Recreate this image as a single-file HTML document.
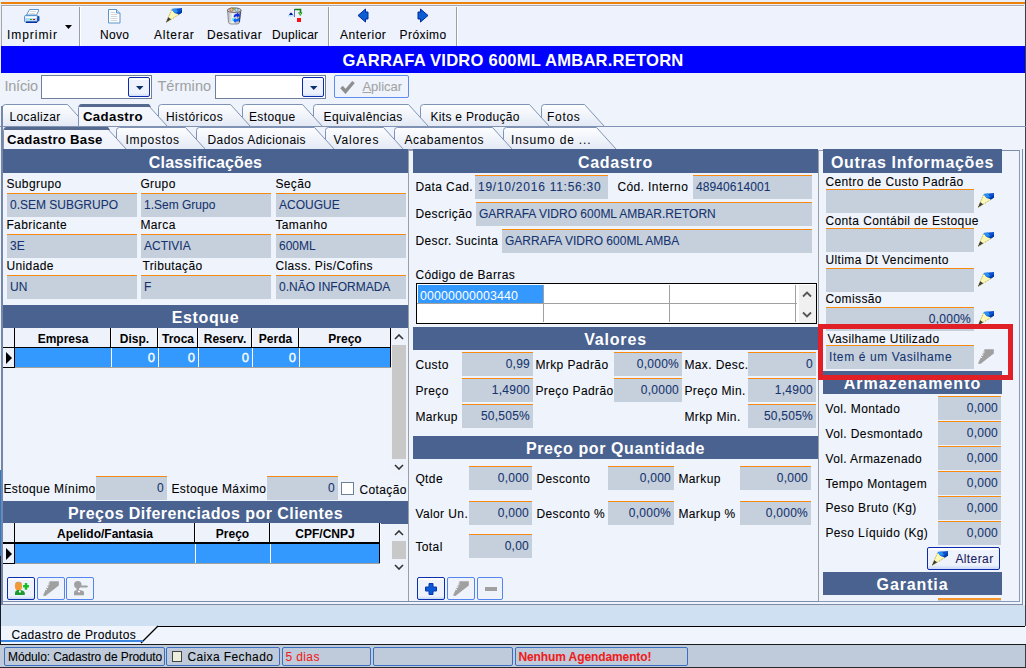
<!DOCTYPE html><html><head><meta charset="utf-8"><style>
*{margin:0;padding:0;box-sizing:border-box}
html,body{width:1026px;height:668px;overflow:hidden;background:#eef3fc;font-family:"Liberation Sans",sans-serif;font-size:12px;color:#000}
#r{position:relative;width:1026px;height:668px;overflow:hidden}
#r div,#r svg{position:absolute}
.l{white-space:nowrap;line-height:14px;font-size:12px;letter-spacing:.4px;-webkit-text-stroke:.08px currentColor}
.f{background:linear-gradient(#fb8a0c 0 1px,#bdd0e6 1px 2px,#c5d0dc 2px);padding-top:2px;color:#15336f;white-space:nowrap;overflow:hidden;font-size:12px;-webkit-text-stroke:.08px currentColor}
.h{background:#4a628f;color:#fff;font-weight:bold;font-size:16px;letter-spacing:.4px;text-align:center;white-space:nowrap;overflow:hidden}
.btn{border:1px solid #2d58b8;border-radius:3px;background:linear-gradient(#f6f9fe,#e6edf9)}
.btd{border:1px solid #7aa0e6;border-radius:3px;background:#eef3fc}
</style></head><body><div id="r">
<div class="" style="left:0px;top:0px;width:1026px;height:46px;background:#eaeff8"></div>
<div class="" style="left:1px;top:2px;width:1024px;height:2px;background:#ee8208"></div>
<div class="" style="left:1px;top:5px;width:1023px;height:41px;background:#eef2fc;border-top:1px solid #a4a6aa;border-left:1px solid #a4a6aa"></div>
<div class="" style="left:2px;top:6px;width:1021px;height:1px;background:#f8faff"></div>
<div class="" style="left:1025px;top:0px;width:1px;height:668px;background:#3a3f4a"></div>
<div class="" style="left:79px;top:7px;width:1px;height:39px;background:#9a9ea6"></div>
<div class="" style="left:80px;top:7px;width:1px;height:39px;background:#ffffff"></div>
<div class="" style="left:328px;top:7px;width:1px;height:39px;background:#9a9ea6"></div>
<div class="" style="left:329px;top:7px;width:1px;height:39px;background:#ffffff"></div>
<div class="" style="left:456px;top:7px;width:1px;height:39px;background:#9a9ea6"></div>
<div class="" style="left:457px;top:7px;width:1px;height:39px;background:#ffffff"></div>
<div class="l" style="left:7.0px;top:28px;letter-spacing:0.95px">Imprimir</div>
<div class="l" style="left:100.0px;top:28px;letter-spacing:0.3px">Novo</div>
<div class="l" style="left:154.0px;top:28px;letter-spacing:0.75px">Alterar</div>
<div class="l" style="left:207.0px;top:28px;letter-spacing:0.5px">Desativar</div>
<div class="l" style="left:272.0px;top:28px;letter-spacing:0.3px">Duplicar</div>
<div class="l" style="left:340.0px;top:28px;letter-spacing:0.55px">Anterior</div>
<div class="l" style="left:399.5px;top:28px;letter-spacing:0.45px">Próximo</div>
<svg style="left:65px;top:25px" width="8" height="5"><path d="M0 0H7L3.5 4Z" fill="#000"/></svg>
<svg style="left:24px;top:8px" width="16" height="16" viewBox="0 0 16 16">
<path d="M5.5 1.5H14.5V3L12.5 7H2.5Z" fill="#fff" stroke="#5b95cf"/>
<path d="M6 3.5H12M5 5.5H11" stroke="#d8d8d8"/>
<rect x="0.5" y="7.5" width="13" height="6.5" rx="1" fill="#b8dafa" stroke="#5b95cf"/>
<path d="M13.5 7.5L15.5 8.5V12.5L13 14.5Z" fill="#1a4fb0"/>
<rect x="1.5" y="8.5" width="11" height="1.5" fill="#fff"/>
<rect x="2" y="13.5" width="11" height="1.5" fill="#00309a"/>
<rect x="6" y="11" width="2" height="1" fill="#10c010"/><rect x="9" y="11" width="2" height="1" fill="#e00000"/>
</svg>
<svg style="left:108px;top:9px" width="13" height="15" viewBox="0 0 13 15">
<path d="M.5 .5H8.5L12 4V14H.5Z" fill="#fff" stroke="#5b95cf"/><path d="M8.5 .5V4H12" fill="#dde8f5" stroke="#5b95cf"/>
<path d="M2.5 3.5H7M2.5 5.5H9.5M2.5 7.5H9.5M2.5 9.5H9.5M2.5 11.5H9.5" stroke="#d4d8de"/></svg>
<svg style="left:166px;top:7px" width="17" height="17" viewBox="0 0 17 17"><path d="M5.5 3L13 7.5L0 15.5Z" fill="#fbf8b8"/><path d="M5.5 3L0 15.5M13 7.5L0 15.5" stroke="#b0a828" stroke-width="1" stroke-dasharray="1 1"/><path d="M0 15.5L2.2 10.3L5.2 12.3Z" fill="#3c3c3c"/><path d="M5.5 2L16 1V5.5L13 7.5L8.5 6Z" fill="#0a50d0"/><path d="M5.5 2L10 1.5L12 5L8.5 6Z" fill="#2a90f0"/><path d="M16 3V5.5L13 7.5L11.5 6.5Z" fill="#003a9e"/></svg>
<svg style="left:226px;top:7px" width="17" height="18" viewBox="0 0 17 18">
<defs><linearGradient id="bg1" x1="0" x2="1"><stop offset="0" stop-color="#b8b8b8"/><stop offset=".35" stop-color="#f6f6f6"/><stop offset="1" stop-color="#a8a8b0"/></linearGradient></defs>
<path d="M1.5 3.5L2.5 15.5Q3 17 5 17H11Q13 17 13.5 15.5L15 3.5Z" fill="url(#bg1)" stroke="#7a7a7a" stroke-width=".8"/>
<path d="M14.3 4.5L13.3 15" stroke="#283878" stroke-width="1"/>
<path d="M3.5 5.5V15.5M5 5.5V15.5" stroke="#b8c0f0" stroke-width=".8" stroke-dasharray="1 1"/>
<ellipse cx="8.25" cy="3.2" rx="6.9" ry="2.3" fill="#d8d8d8" stroke="#505050" stroke-width=".8"/>
<circle cx="5.5" cy="2.6" r="1.7" fill="#f4b4b4" stroke="#a05018" stroke-width=".7"/>
<circle cx="10.5" cy="2.8" r="1.5" fill="#b8ecf0" stroke="#4a4a8a" stroke-width=".5"/>
<path d="M7.5 .8L8.5 3" stroke="#40c018" stroke-width="1.1"/>
<path d="M7.5 9.5Q8.2 6.5 11.2 6.8V5.3L14 8.2L11.2 10.8V9.3Q9.6 9 8.8 10.5Z" fill="#0a30e8"/>
<path d="M13.5 12Q12.8 15 9.6 14.7V16.2L6.8 13.3L9.6 10.7V12.2Q11.4 12.5 12 11Z" fill="#0a64f4"/>
<path d="M7 11V14" stroke="#30e0f8" stroke-width="1.2"/></svg>
<svg style="left:288px;top:8px" width="15" height="15" viewBox="0 0 15 15">
<path d="M1 7Q3 2 5 7Z" fill="#00208a"/><rect x="0" y="7" width="6" height="1.5" fill="#b0e0ff"/>
<rect x="6" y="1" width="1" height="8" fill="#6a6ac8"/>
<path d="M6.5 1.5H12.5V5.5" stroke="#108010" stroke-width="1.6" fill="none"/>
<path d="M10 4.5H14.5L12.3 8Z" fill="#108010"/><rect x="11.5" y="5" width="1.6" height="1.6" fill="#80f060"/>
<rect x="9" y="10" width="4" height="4" fill="#ff1010"/></svg>
<svg style="left:356px;top:7px" width="14" height="17" viewBox="356 7 14 17"><path d="M358 15.5L365.5 9V12H368V19H365.5V22Z" fill="#0a5ed0" stroke="#0028a0" stroke-width="1" stroke-linejoin="miter"/></svg>
<svg style="left:416px;top:7px" width="14" height="17" viewBox="416 7 14 17"><path d="M428 15.5L420.5 9V12H418V19H420.5V22Z" fill="#0a5ed0" stroke="#0028a0" stroke-width="1" stroke-linejoin="miter"/></svg>
<div class="" style="left:1px;top:46px;width:1024px;height:27px;background:#0000fe"></div>
<div style="left:0;top:46px;width:1026px;height:27px;line-height:29px;text-align:center;color:#fff;font-weight:bold;font-size:16.6px;letter-spacing:.2px;white-space:nowrap">GARRAFA VIDRO 600ML AMBAR.RETORN</div>
<div class="l" style="left:4.4px;top:79px;color:#a0a0a0;font-size:14.5px;letter-spacing:-.2px;-webkit-text-stroke:0">Início</div>
<div class="" style="left:41px;top:75px;width:111px;height:24px;background:#fff;border:1px solid #6f7f9c"></div>
<div class="" style="left:128px;top:77px;width:22px;height:20px;background:linear-gradient(#fff 0 2px,#eef2fc 2px 15px,#c9d9f8 19px);border:1px solid #0c2cb0;border-radius:2px"></div>
<svg style="left:135.5px;top:86px" width="8" height="5"><path d="M0 0H7.5L3.75 4Z" fill="#0a2e6e"/></svg>
<div class="l" style="left:157.4px;top:79px;color:#a0a0a0;font-size:14.5px;letter-spacing:.1px;-webkit-text-stroke:0">Término</div>
<div class="" style="left:215px;top:75px;width:111px;height:24px;background:#fff;border:1px solid #6f7f9c"></div>
<div class="" style="left:302px;top:77px;width:22px;height:20px;background:linear-gradient(#fff 0 2px,#eef2fc 2px 15px,#c9d9f8 19px);border:1px solid #0c2cb0;border-radius:2px"></div>
<svg style="left:309.5px;top:86px" width="8" height="5"><path d="M0 0H7.5L3.75 4Z" fill="#0a2e6e"/></svg>
<div class="" style="left:334px;top:75px;width:75px;height:23px;background:#eef3fc;border:1px solid #5e8cf0;border-radius:2px"></div>
<svg style="left:338px;top:78px" width="20" height="17" viewBox="338 78 20 17"><path d="M341.5 87L345.5 91.5L353.5 82" stroke="#8e8e8e" stroke-width="3.4" fill="none" stroke-linejoin="miter" stroke-miterlimit="10"/></svg>
<div class="l" style="left:362.4px;top:80px;color:#a3a3a3;font-size:13px;letter-spacing:0"><u>A</u>plicar</div>
<div class="" style="left:0px;top:126px;width:1026px;height:1px;background:#8193b4"></div>
<svg style="left:0;top:103px" width="1026" height="24" viewBox="0 103 1026 24"><defs><linearGradient id="tg" x1="0" y1="0" x2="0" y2="1"><stop offset="0" stop-color="#fdfeff"/><stop offset="1" stop-color="#e3e9f5"/></linearGradient><linearGradient id="ta" x1="0" y1="0" x2="0" y2="1"><stop offset="0" stop-color="#f6f8fe"/><stop offset="1" stop-color="#eef2fb"/></linearGradient></defs><path d="M541.5 126.5V107.5Q541.5 104.5 544.5 104.5H584.5L604.5 126.5Z" fill="url(#tg)" stroke="#8193b4"/><path d="M420.5 126.5V107.5Q420.5 104.5 423.5 104.5H529.5L549.5 126.5Z" fill="url(#tg)" stroke="#8193b4"/><path d="M313.5 126.5V107.5Q313.5 104.5 316.5 104.5H408.5L428.5 126.5Z" fill="url(#tg)" stroke="#8193b4"/><path d="M242.5 126.5V107.5Q242.5 104.5 245.5 104.5H302.5L322.5 126.5Z" fill="url(#tg)" stroke="#8193b4"/><path d="M158.5 126.5V107.5Q158.5 104.5 161.5 104.5H230.5L250.5 126.5Z" fill="url(#tg)" stroke="#8193b4"/><path d="M2.5 126.5V107.5Q2.5 104.5 5.5 104.5H67.5L87.5 126.5Z" fill="url(#tg)" stroke="#8193b4"/><path d="M78.5 126.5V107.5Q78.5 104.5 81.5 104.5H147.5L167.5 126.5Z" fill="url(#ta)" stroke="#8193b4"/><path d="M79 107Q79 104 82 104H149L151 107H79Z" fill="#56698f"/><text x="9.5" y="121" font-family="Liberation Sans" font-size="12" font-weight="normal" letter-spacing="0.35" fill="#000">Localizar</text><text x="83" y="121" font-family="Liberation Sans" font-size="13.2" font-weight="bold" letter-spacing="0.35" fill="#000">Cadastro</text><text x="166" y="121" font-family="Liberation Sans" font-size="12" font-weight="normal" letter-spacing="0.45" fill="#000">Históricos</text><text x="249" y="121" font-family="Liberation Sans" font-size="12" font-weight="normal" letter-spacing="0.35" fill="#000">Estoque</text><text x="323.5" y="121" font-family="Liberation Sans" font-size="12" font-weight="normal" letter-spacing="0.4" fill="#000">Equivalências</text><text x="430.5" y="121" font-family="Liberation Sans" font-size="12" font-weight="normal" letter-spacing="0.3" fill="#000">Kits e Produção</text><text x="547" y="121" font-family="Liberation Sans" font-size="12" font-weight="normal" letter-spacing="0.7" fill="#000">Fotos</text></svg>
<svg style="left:0;top:126px" width="1026" height="24" viewBox="0 126 1026 24"><defs><linearGradient id="tg" x1="0" y1="0" x2="0" y2="1"><stop offset="0" stop-color="#fdfeff"/><stop offset="1" stop-color="#e3e9f5"/></linearGradient><linearGradient id="ta" x1="0" y1="0" x2="0" y2="1"><stop offset="0" stop-color="#f6f8fe"/><stop offset="1" stop-color="#eef2fb"/></linearGradient></defs><path d="M503.5 149.5V130.5Q503.5 127.5 506.5 127.5H596.5L616.5 149.5Z" fill="url(#tg)" stroke="#8193b4"/><path d="M394.5 149.5V130.5Q394.5 127.5 397.5 127.5H492.5L512.5 149.5Z" fill="url(#tg)" stroke="#8193b4"/><path d="M325.5 149.5V130.5Q325.5 127.5 328.5 127.5H383.5L403.5 149.5Z" fill="url(#tg)" stroke="#8193b4"/><path d="M196.5 149.5V130.5Q196.5 127.5 199.5 127.5H314.5L334.5 149.5Z" fill="url(#tg)" stroke="#8193b4"/><path d="M116.5 149.5V130.5Q116.5 127.5 119.5 127.5H185.5L205.5 149.5Z" fill="url(#tg)" stroke="#8193b4"/><path d="M3.5 149.5V130.5Q3.5 127.5 6.5 127.5H106.5L126.5 149.5Z" fill="url(#ta)" stroke="#8193b4"/><path d="M4 130Q4 127 7 127H108L110 130H4Z" fill="#56698f"/><text x="7" y="144" font-family="Liberation Sans" font-size="13.2" font-weight="bold" letter-spacing="0.25" fill="#000">Cadastro Base</text><text x="125.5" y="144" font-family="Liberation Sans" font-size="12" font-weight="normal" letter-spacing="0.7" fill="#000">Impostos</text><text x="207.5" y="144" font-family="Liberation Sans" font-size="12" font-weight="normal" letter-spacing="0.4" fill="#000">Dados Adicionais</text><text x="333.5" y="144" font-family="Liberation Sans" font-size="12" font-weight="normal" letter-spacing="0.85" fill="#000">Valores</text><text x="404.5" y="144" font-family="Liberation Sans" font-size="12" font-weight="normal" letter-spacing="0.55" fill="#000">Acabamentos</text><text x="511" y="144" font-family="Liberation Sans" font-size="12" font-weight="normal" letter-spacing="0.85" fill="#000">Insumo de ...</text></svg>
<div class="" style="left:1px;top:106px;width:2px;height:44px;background:#7587a8"></div>
<div class="" style="left:1px;top:149px;width:1022px;height:456px;border:1px solid #7c8cab;border-left:2px solid #7587a8;border-top:none"></div>
<div class="" style="left:1px;top:601px;width:1019px;height:1px;background:#7c8cab"></div>
<div class="" style="left:819px;top:150px;width:201px;height:452px;border:1px solid #8a9ab6;border-top:1px solid #7c8cab"></div>
<div class="" style="left:408px;top:150px;width:5px;height:451px;background:#eef3fc;border-left:1px solid #9a9ea6;border-top:1px solid #9a9ea6"></div>
<div class="" style="left:818px;top:150px;width:5px;height:451px;background:#eef3fc;border-left:1px solid #9a9ea6;border-top:1px solid #9a9ea6"></div>
<div class="h" style="left:3px;top:149px;width:405px;height:24px;line-height:27px;letter-spacing:.15px">Classificações</div>
<div class="l" style="left:6.4px;top:177px;">Subgrupo</div>
<div class="l" style="left:140.4px;top:177px;">Grupo</div>
<div class="l" style="left:275.4px;top:177px;">Seção</div>
<div class="f" style="left:7px;top:193px;width:130px;height:24px;line-height:21px;padding-left:3px;">0.SEM SUBGRUPO</div>
<div class="f" style="left:141px;top:193px;width:130px;height:24px;line-height:21px;padding-left:3px;">1.Sem Grupo</div>
<div class="f" style="left:276px;top:193px;width:130px;height:24px;line-height:21px;padding-left:3px;">ACOUGUE</div>
<div class="l" style="left:6.4px;top:218px;">Fabricante</div>
<div class="l" style="left:140.4px;top:218px;">Marca</div>
<div class="l" style="left:275.4px;top:218px;">Tamanho</div>
<div class="f" style="left:7px;top:234px;width:130px;height:24px;line-height:21px;padding-left:3px;">3E</div>
<div class="f" style="left:141px;top:234px;width:130px;height:24px;line-height:21px;padding-left:3px;">ACTIVIA</div>
<div class="f" style="left:276px;top:234px;width:130px;height:24px;line-height:21px;padding-left:3px;">600ML</div>
<div class="l" style="left:6.4px;top:259px;">Unidade</div>
<div class="l" style="left:142.4px;top:259px;">Tributação</div>
<div class="l" style="left:275.4px;top:259px;">Class. Pis/Cofins</div>
<div class="f" style="left:7px;top:275px;width:130px;height:24px;line-height:21px;padding-left:3px;">UN</div>
<div class="f" style="left:141px;top:275px;width:130px;height:24px;line-height:21px;padding-left:3px;">F</div>
<div class="f" style="left:276px;top:275px;width:130px;height:24px;line-height:21px;padding-left:3px;">0.NÃO INFORMADA</div>
<div class="h" style="left:3px;top:305px;width:405px;height:23px;line-height:25px;letter-spacing:.6px">Estoque</div>
<div class="" style="left:3px;top:328px;width:388px;height:20px;background:#eef2fb"></div>
<div class="" style="left:3px;top:348px;width:12px;height:20px;background:#eef2fb"></div>
<div class="" style="left:14px;top:328px;width:1px;height:40px;background:#000"></div>
<div style="left:15px;top:328px;width:96px;height:20px;line-height:22px;text-align:center;font-weight:bold;font-size:12px;white-space:nowrap">Empresa</div>
<div class="" style="left:110px;top:328px;width:1px;height:20px;background:#000"></div>
<div class="" style="left:111px;top:328px;width:1px;height:20px;background:#fafcff"></div>
<div style="left:111px;top:328px;width:47px;height:20px;line-height:22px;text-align:center;font-weight:bold;font-size:12px;white-space:nowrap">Disp.</div>
<div class="" style="left:157px;top:328px;width:1px;height:20px;background:#000"></div>
<div class="" style="left:158px;top:328px;width:1px;height:20px;background:#fafcff"></div>
<div style="left:158px;top:328px;width:40px;height:20px;line-height:22px;text-align:center;font-weight:bold;font-size:12px;white-space:nowrap">Troca</div>
<div class="" style="left:197px;top:328px;width:1px;height:20px;background:#000"></div>
<div class="" style="left:198px;top:328px;width:1px;height:20px;background:#fafcff"></div>
<div style="left:198px;top:328px;width:54px;height:20px;line-height:22px;text-align:center;font-weight:bold;font-size:12px;white-space:nowrap">Reserv.</div>
<div class="" style="left:251px;top:328px;width:1px;height:20px;background:#000"></div>
<div class="" style="left:252px;top:328px;width:1px;height:20px;background:#fafcff"></div>
<div style="left:252px;top:328px;width:47px;height:20px;line-height:22px;text-align:center;font-weight:bold;font-size:12px;white-space:nowrap">Perda</div>
<div class="" style="left:298px;top:328px;width:1px;height:20px;background:#000"></div>
<div class="" style="left:299px;top:328px;width:1px;height:20px;background:#fafcff"></div>
<div style="left:299px;top:328px;width:92px;height:20px;line-height:22px;text-align:center;font-weight:bold;font-size:12px;white-space:nowrap">Preço</div>
<div class="" style="left:390px;top:328px;width:1px;height:20px;background:#000"></div>
<div class="" style="left:391px;top:328px;width:1px;height:20px;background:#fafcff"></div>
<div class="" style="left:3px;top:347px;width:388px;height:1px;background:#000"></div>
<div class="" style="left:15px;top:348px;width:376px;height:19px;background:#3399ff"></div>
<div class="" style="left:3px;top:367px;width:388px;height:1px;background:#a0a0a0"></div>
<div class="" style="left:3px;top:367px;width:12px;height:1px;background:#000"></div>
<svg style="left:5px;top:352px" width="8" height="12"><path d="M1 0L7 6L1 12Z" fill="#000"/></svg>
<div class="" style="left:111px;top:348px;width:1px;height:19px;background:#fff"></div>
<div style="left:111px;top:348px;width:44px;height:19px;line-height:20.5px;text-align:right;color:#fff;font-size:13px;-webkit-text-stroke:.35px #fff">0</div>
<div class="" style="left:158px;top:348px;width:1px;height:19px;background:#fff"></div>
<div style="left:158px;top:348px;width:37px;height:19px;line-height:20.5px;text-align:right;color:#fff;font-size:13px;-webkit-text-stroke:.35px #fff">0</div>
<div class="" style="left:198px;top:348px;width:1px;height:19px;background:#fff"></div>
<div style="left:198px;top:348px;width:51px;height:19px;line-height:20.5px;text-align:right;color:#fff;font-size:13px;-webkit-text-stroke:.35px #fff">0</div>
<div class="" style="left:252px;top:348px;width:1px;height:19px;background:#fff"></div>
<div style="left:252px;top:348px;width:44px;height:19px;line-height:20.5px;text-align:right;color:#fff;font-size:13px;-webkit-text-stroke:.35px #fff">0</div>
<div class="" style="left:299px;top:348px;width:1px;height:19px;background:#fff"></div>
<div class="" style="left:390px;top:348px;width:1px;height:19px;background:#000"></div>
<div class="" style="left:391px;top:328px;width:16px;height:149px;background:#eef2fb"></div>
<div class="" style="left:392px;top:345px;width:14px;height:114px;background:#c8c8c8"></div>
<svg style="left:394px;top:334px" width="10" height="6"><path d="M1 5L5 1L9 5" stroke="#333" stroke-width="1.6" fill="none"/></svg>
<svg style="left:394px;top:464px" width="10" height="6"><path d="M1 1L5 5L9 1" stroke="#333" stroke-width="1.6" fill="none"/></svg>
<div class="l" style="left:3.4px;top:482px;">Estoque Mínimo</div>
<div class="f" style="left:96px;top:476px;width:71px;height:24px;line-height:21px;padding-right:3px;text-align:right;letter-spacing:.25px;">0</div>
<div class="l" style="left:171.4px;top:482px;">Estoque Máximo</div>
<div class="f" style="left:267px;top:476px;width:71px;height:24px;line-height:21px;padding-right:3px;text-align:right;letter-spacing:.25px;">0</div>
<div class="" style="left:341px;top:482px;width:13px;height:13px;background:#fff;border:1px solid #6f7f98"></div>
<div class="l" style="left:359.4px;top:483px;">Cotação</div>
<div class="h" style="left:3px;top:501px;width:405px;height:23px;line-height:25px;letter-spacing:.44px">Preços Diferenciados por Clientes</div>
<div class="" style="left:3px;top:523px;width:377px;height:21px;background:#eef2fb"></div>
<div class="" style="left:3px;top:544px;width:12px;height:20px;background:#eef2fb"></div>
<div class="" style="left:14px;top:523px;width:1px;height:41px;background:#000"></div>
<div style="left:15px;top:523px;width:180px;height:21px;line-height:23px;text-align:center;font-weight:bold;font-size:12px;white-space:nowrap">Apelido/Fantasia</div>
<div class="" style="left:194px;top:523px;width:1px;height:21px;background:#000"></div>
<div class="" style="left:195px;top:523px;width:1px;height:21px;background:#fafcff"></div>
<div style="left:195px;top:523px;width:75px;height:21px;line-height:23px;text-align:center;font-weight:bold;font-size:12px;white-space:nowrap">Preço</div>
<div class="" style="left:269px;top:523px;width:1px;height:21px;background:#000"></div>
<div class="" style="left:270px;top:523px;width:1px;height:21px;background:#fafcff"></div>
<div style="left:270px;top:523px;width:110px;height:21px;line-height:23px;text-align:center;font-weight:bold;font-size:12px;white-space:nowrap">CPF/CNPJ</div>
<div class="" style="left:379px;top:523px;width:1px;height:21px;background:#000"></div>
<div class="" style="left:380px;top:523px;width:1px;height:21px;background:#fafcff"></div>
<div class="" style="left:3px;top:543px;width:377px;height:1px;background:#000"></div>
<div class="" style="left:15px;top:544px;width:365px;height:19px;background:#3399ff"></div>
<div class="" style="left:3px;top:563px;width:377px;height:1px;background:#a0a0a0"></div>
<div class="" style="left:3px;top:563px;width:12px;height:1px;background:#000"></div>
<svg style="left:5px;top:548px" width="8" height="12"><path d="M1 0L7 6L1 12Z" fill="#000"/></svg>
<div class="" style="left:195px;top:544px;width:1px;height:19px;background:#fff"></div>
<div class="" style="left:270px;top:544px;width:1px;height:19px;background:#fff"></div>
<div class="" style="left:379px;top:544px;width:1px;height:19px;background:#000"></div>
<div class="" style="left:3px;top:542px;width:377px;height:1px;background:#000"></div>
<div class="" style="left:391px;top:524px;width:16px;height:52px;background:#eef2fb"></div>
<div class="" style="left:392px;top:541px;width:14px;height:18px;background:#c8c8c8"></div>
<svg style="left:394px;top:530px" width="10" height="6"><path d="M1 5L5 1L9 5" stroke="#333" stroke-width="1.6" fill="none"/></svg>
<svg style="left:394px;top:564px" width="10" height="6"><path d="M1 1L5 5L9 1" stroke="#333" stroke-width="1.6" fill="none"/></svg>
<div class="" style="left:7px;top:577px;width:28px;height:23px;border:1px solid #0a30b0;border-radius:2px;background:linear-gradient(#fff 0 2px,#eef2fc 2px 18px,#c9d8f6 21px)"></div>
<svg style="left:13px;top:581px" width="18" height="16" viewBox="13 581 18 16"><ellipse cx="18.5" cy="586.3" rx="3.6" ry="4.2" fill="#f39a38"/><path d="M15.5 583.5Q18.5 581 21.5 583.5" stroke="#c8a060" stroke-width="1.2" fill="none"/><path d="M15 595V593Q15 590.5 17.5 590H20.5Q24.5 590.5 24.8 593V595Z" fill="#1f9a30"/><rect x="19" y="590.5" width="1.8" height="2" fill="#fff"/><path d="M23.1 586.3H28.9M26 583V589.8" stroke="#10c020" stroke-width="2.4"/></svg>
<div class="" style="left:37px;top:577px;width:28px;height:23px;border:1px solid #5384ef;border-radius:2px"></div>
<svg style="left:42px;top:580px" width="18" height="17" viewBox="42 580 18 17"><path d="M43 595.5L49.7 581.3H58.8V585.4L45.4 596Z" fill="#a0a0a0"/><path d="M49.3 583.5L46.3 590" stroke="#f4f4f4" stroke-width="1" stroke-dasharray="2 1"/></svg>
<div class="" style="left:66px;top:577px;width:28px;height:23px;border:1px solid #5384ef;border-radius:2px"></div>
<svg style="left:72px;top:580px" width="18" height="17" viewBox="72 580 18 17"><circle cx="77.8" cy="584.8" r="3.7" fill="#a0a0a0"/><path d="M76.5 588H79V590H76.5Z" fill="#a0a0a0"/><path d="M74 595.2V592.5Q74 590.5 76 590.3H80Q84 590.5 84 592.5V595.2Z" fill="#a0a0a0"/><rect x="78" y="591" width="2" height="1.3" fill="#fff"/><path d="M81 585.6H87L88 586.5L87 587.5H81Z" fill="#a0a0a0"/></svg>
<div class="h" style="left:413px;top:149px;width:405px;height:24px;line-height:27px;letter-spacing:.7px">Cadastro</div>
<div class="l" style="left:415.4px;top:180px;">Data Cad.</div>
<div class="f" style="left:475px;top:175px;width:133px;height:24px;line-height:21px;padding-left:3px;letter-spacing:.75px">19/10/2016 11:56:30</div>
<div class="l" style="left:617.4px;top:180px;">Cód. Interno</div>
<div class="f" style="left:693px;top:175px;width:119px;height:24px;line-height:21px;padding-left:3px;letter-spacing:.1px">48940614001</div>
<div class="l" style="left:415.4px;top:207px;">Descrição</div>
<div class="f" style="left:476px;top:202px;width:336px;height:24px;line-height:21px;padding-left:3px;">GARRAFA VIDRO 600ML AMBAR.RETORN</div>
<div class="l" style="left:415.4px;top:234px;">Descr. Sucinta</div>
<div class="f" style="left:502px;top:229px;width:310px;height:24px;line-height:21px;padding-left:3px;">GARRAFA VIDRO 600ML AMBA</div>
<div class="l" style="left:415.4px;top:268px;">Código de Barras</div>
<div class="" style="left:416px;top:283px;width:401px;height:41px;background:#fff;border:1px solid #000"></div>
<div class="" style="left:418px;top:285px;width:125px;height:18px;background:#3399ff"></div>
<div style="left:420px;top:286px;height:18px;line-height:20px;color:#fff;font-size:12.4px;letter-spacing:.1px;white-space:nowrap">00000000003440</div>
<div class="" style="left:417px;top:303px;width:380px;height:1px;background:#a0a0a0"></div>
<div class="" style="left:543px;top:285px;width:1px;height:37px;background:#a0a0a0"></div>
<div class="" style="left:669px;top:285px;width:1px;height:37px;background:#a0a0a0"></div>
<div class="" style="left:795px;top:285px;width:1px;height:37px;background:#a0a0a0"></div>
<div class="" style="left:799px;top:285px;width:17px;height:38px;background:#f0f0f0"></div>
<svg style="left:802px;top:291px" width="10" height="7"><path d="M1 5.5L5 1.5L9 5.5" stroke="#555" stroke-width="1.8" fill="none"/></svg>
<svg style="left:802px;top:311px" width="10" height="7"><path d="M1 1.5L5 5.5L9 1.5" stroke="#555" stroke-width="1.8" fill="none"/></svg>
<div class="h" style="left:413px;top:327px;width:405px;height:23px;line-height:25px;letter-spacing:.83px">Valores</div>
<div class="l" style="left:415.4px;top:357.5px;">Custo</div>
<div class="f" style="left:462px;top:352px;width:71px;height:24px;line-height:21px;padding-right:3px;text-align:right;letter-spacing:.25px;">0,99</div>
<div class="l" style="left:535.4px;top:357.5px;">Mrkp Padrão</div>
<div class="f" style="left:614px;top:352px;width:68px;height:24px;line-height:21px;padding-right:3px;text-align:right;letter-spacing:.25px;">0,000%</div>
<div class="l" style="left:684.4px;top:357.5px;">Max. Desc.</div>
<div class="f" style="left:748px;top:352px;width:68px;height:24px;line-height:21px;padding-right:3px;text-align:right;letter-spacing:.25px;">0</div>
<div class="l" style="left:415.4px;top:383.5px;">Preço</div>
<div class="f" style="left:462px;top:378px;width:71px;height:24px;line-height:21px;padding-right:3px;text-align:right;letter-spacing:.25px;">1,4900</div>
<div class="l" style="left:535.4px;top:383.5px;">Preço Padrão</div>
<div class="f" style="left:614px;top:378px;width:68px;height:24px;line-height:21px;padding-right:3px;text-align:right;letter-spacing:.25px;">0,0000</div>
<div class="l" style="left:684.4px;top:383.5px;">Preço Min.</div>
<div class="f" style="left:748px;top:378px;width:68px;height:24px;line-height:21px;padding-right:3px;text-align:right;letter-spacing:.25px;">1,4900</div>
<div class="l" style="left:415.4px;top:409.5px;">Markup</div>
<div class="f" style="left:462px;top:404px;width:71px;height:24px;line-height:21px;padding-right:3px;text-align:right;letter-spacing:.25px;">50,505%</div>
<div class="l" style="left:684.4px;top:409.5px;">Mrkp Min.</div>
<div class="f" style="left:748px;top:404px;width:68px;height:24px;line-height:21px;padding-right:3px;text-align:right;letter-spacing:.25px;">50,505%</div>
<div class="h" style="left:413px;top:436px;width:405px;height:23px;line-height:25px;letter-spacing:.6px">Preço por Quantidade</div>
<div class="l" style="left:415.4px;top:472px;">Qtde</div>
<div class="f" style="left:469px;top:466px;width:63px;height:24px;line-height:21px;padding-right:3px;text-align:right;letter-spacing:.25px;">0,000</div>
<div class="l" style="left:536.4px;top:472px;">Desconto</div>
<div class="f" style="left:608px;top:466px;width:66px;height:24px;line-height:21px;padding-right:3px;text-align:right;letter-spacing:.25px;">0,000</div>
<div class="l" style="left:678.4px;top:472px;">Markup</div>
<div class="f" style="left:740px;top:466px;width:71px;height:24px;line-height:21px;padding-right:3px;text-align:right;letter-spacing:.25px;">0,000</div>
<div class="l" style="left:415.4px;top:507px;">Valor Un.</div>
<div class="f" style="left:469px;top:501px;width:63px;height:24px;line-height:21px;padding-right:3px;text-align:right;letter-spacing:.25px;">0,000</div>
<div class="l" style="left:536.4px;top:507px;">Desconto %</div>
<div class="f" style="left:608px;top:501px;width:66px;height:24px;line-height:21px;padding-right:3px;text-align:right;letter-spacing:.25px;">0,000%</div>
<div class="l" style="left:678.4px;top:507px;">Markup %</div>
<div class="f" style="left:740px;top:501px;width:71px;height:24px;line-height:21px;padding-right:3px;text-align:right;letter-spacing:.25px;">0,000%</div>
<div class="l" style="left:415.4px;top:540px;">Total</div>
<div class="f" style="left:469px;top:534px;width:63px;height:24px;line-height:21px;padding-right:3px;text-align:right;letter-spacing:.25px;">0,00</div>
<div class="" style="left:417px;top:577px;width:28px;height:23px;border:1px solid #0a30b0;border-radius:2px;background:linear-gradient(#fff 0 2px,#eef2fc 2px 18px,#c9d8f6 21px)"></div>
<svg style="left:424px;top:582px" width="14" height="14" viewBox="424 582 14 14"><path d="M429 583.5H433V587H436.5V591H433V594.5H429V591H425.5V587H429Z" fill="#0a5ad8" stroke="#0a36a8" stroke-width="1"/></svg>
<div class="" style="left:447px;top:577px;width:28px;height:23px;border:1px solid #5384ef;border-radius:2px"></div>
<svg style="left:452px;top:580px" width="18" height="17" viewBox="452 580 18 17"><path d="M453 595.5L459.7 581.3H468.8V585.4L455.4 596Z" fill="#a0a0a0"/><path d="M459.3 583.5L456.3 590" stroke="#f4f4f4" stroke-width="1" stroke-dasharray="2 1"/></svg>
<div class="" style="left:477px;top:577px;width:26px;height:23px;border:1px solid #5384ef;border-radius:2px"></div>
<div class="" style="left:485px;top:587px;width:12px;height:4px;background:#a0a0a0"></div>
<div class="h" style="left:823px;top:149px;width:179px;height:24px;line-height:27px;letter-spacing:.67px">Outras Informações</div>
<div class="l" style="left:825.4px;top:175px;">Centro de Custo Padrão</div>
<div class="f" style="left:826px;top:189px;width:148px;height:24px;line-height:21px;padding-right:3px;text-align:right;letter-spacing:.25px;"></div>
<svg style="left:978px;top:192px" width="17" height="17" viewBox="0 0 17 17"><path d="M5.5 3L13 7.5L0 15.5Z" fill="#fbf8b8"/><path d="M5.5 3L0 15.5M13 7.5L0 15.5" stroke="#b0a828" stroke-width="1" stroke-dasharray="1 1"/><path d="M0 15.5L2.2 10.3L5.2 12.3Z" fill="#3c3c3c"/><path d="M5.5 2L16 1V5.5L13 7.5L8.5 6Z" fill="#0a50d0"/><path d="M5.5 2L10 1.5L12 5L8.5 6Z" fill="#2a90f0"/><path d="M16 3V5.5L13 7.5L11.5 6.5Z" fill="#003a9e"/></svg>
<div class="l" style="left:825.4px;top:214px;">Conta Contábil de Estoque</div>
<div class="f" style="left:826px;top:228px;width:148px;height:24px;line-height:21px;padding-right:3px;text-align:right;letter-spacing:.25px;"></div>
<svg style="left:978px;top:231px" width="17" height="17" viewBox="0 0 17 17"><path d="M5.5 3L13 7.5L0 15.5Z" fill="#fbf8b8"/><path d="M5.5 3L0 15.5M13 7.5L0 15.5" stroke="#b0a828" stroke-width="1" stroke-dasharray="1 1"/><path d="M0 15.5L2.2 10.3L5.2 12.3Z" fill="#3c3c3c"/><path d="M5.5 2L16 1V5.5L13 7.5L8.5 6Z" fill="#0a50d0"/><path d="M5.5 2L10 1.5L12 5L8.5 6Z" fill="#2a90f0"/><path d="M16 3V5.5L13 7.5L11.5 6.5Z" fill="#003a9e"/></svg>
<div class="l" style="left:825.4px;top:253px;">Ultima Dt Vencimento</div>
<div class="f" style="left:826px;top:268px;width:148px;height:24px;line-height:21px;padding-right:3px;text-align:right;letter-spacing:.25px;"></div>
<svg style="left:978px;top:271px" width="17" height="17" viewBox="0 0 17 17"><path d="M5.5 3L13 7.5L0 15.5Z" fill="#fbf8b8"/><path d="M5.5 3L0 15.5M13 7.5L0 15.5" stroke="#b0a828" stroke-width="1" stroke-dasharray="1 1"/><path d="M0 15.5L2.2 10.3L5.2 12.3Z" fill="#3c3c3c"/><path d="M5.5 2L16 1V5.5L13 7.5L8.5 6Z" fill="#0a50d0"/><path d="M5.5 2L10 1.5L12 5L8.5 6Z" fill="#2a90f0"/><path d="M16 3V5.5L13 7.5L11.5 6.5Z" fill="#003a9e"/></svg>
<div class="l" style="left:825.4px;top:292px;">Comissão</div>
<div class="f" style="left:826px;top:307px;width:148px;height:24px;line-height:21px;padding-right:3px;text-align:right;letter-spacing:.25px;">0,000%</div>
<svg style="left:978px;top:310px" width="17" height="17" viewBox="0 0 17 17"><path d="M5.5 3L13 7.5L0 15.5Z" fill="#fbf8b8"/><path d="M5.5 3L0 15.5M13 7.5L0 15.5" stroke="#b0a828" stroke-width="1" stroke-dasharray="1 1"/><path d="M0 15.5L2.2 10.3L5.2 12.3Z" fill="#3c3c3c"/><path d="M5.5 2L16 1V5.5L13 7.5L8.5 6Z" fill="#0a50d0"/><path d="M5.5 2L10 1.5L12 5L8.5 6Z" fill="#2a90f0"/><path d="M16 3V5.5L13 7.5L11.5 6.5Z" fill="#003a9e"/></svg>
<div class="l" style="left:827.4px;top:332px;">Vasilhame Utilizado</div>
<div class="f" style="left:826px;top:345px;width:148px;height:24px;line-height:21px;padding-left:3px;letter-spacing:.6px">Item é um Vasilhame</div>
<svg style="left:977px;top:348px" width="18" height="17" viewBox="977 348 18 17"><path d="M978 363.5L984.7 349.3H993.8V353.4L980.4 364Z" fill="#a0a0a0"/><path d="M984.3 351.5L981.3 358" stroke="#f4f4f4" stroke-width="1" stroke-dasharray="2 1"/></svg>
<div class="h" style="left:823px;top:371px;width:179px;height:23px;line-height:25px;letter-spacing:1px">Armazenamento</div>
<div class="l" style="left:825.4px;top:401.5px;">Vol. Montado</div>
<div class="f" style="left:938px;top:396px;width:63px;height:24px;line-height:21px;padding-right:3px;text-align:right;letter-spacing:.25px;">0,000</div>
<div class="l" style="left:825.4px;top:426.5px;">Vol. Desmontado</div>
<div class="f" style="left:938px;top:421px;width:63px;height:24px;line-height:21px;padding-right:3px;text-align:right;letter-spacing:.25px;">0,000</div>
<div class="l" style="left:825.4px;top:451.5px;">Vol. Armazenado</div>
<div class="f" style="left:938px;top:446px;width:63px;height:24px;line-height:21px;padding-right:3px;text-align:right;letter-spacing:.25px;">0,000</div>
<div class="l" style="left:825.4px;top:476.5px;">Tempo Montagem</div>
<div class="f" style="left:938px;top:471px;width:63px;height:24px;line-height:21px;padding-right:3px;text-align:right;letter-spacing:.25px;">0,000</div>
<div class="l" style="left:825.4px;top:500.5px;">Peso Bruto (Kg)</div>
<div class="f" style="left:938px;top:496px;width:63px;height:24px;line-height:21px;padding-right:3px;text-align:right;letter-spacing:.25px;">0,000</div>
<div class="l" style="left:825.4px;top:525.5px;">Peso Líquido (Kg)</div>
<div class="f" style="left:938px;top:521px;width:63px;height:24px;line-height:21px;padding-right:3px;text-align:right;letter-spacing:.25px;">0,000</div>
<div class="" style="left:927px;top:547px;width:73px;height:23px;border:1px solid #0a2ab0;border-radius:2px;background:linear-gradient(#fff 0 2px,#eef2fc 2px 17px,#c9d8f6 21px)"></div>
<svg style="left:932px;top:550px" width="17" height="17" viewBox="0 0 17 17"><path d="M5.5 3L13 7.5L0 15.5Z" fill="#fbf8b8"/><path d="M5.5 3L0 15.5M13 7.5L0 15.5" stroke="#b0a828" stroke-width="1" stroke-dasharray="1 1"/><path d="M0 15.5L2.2 10.3L5.2 12.3Z" fill="#3c3c3c"/><path d="M5.5 2L16 1V5.5L13 7.5L8.5 6Z" fill="#0a50d0"/><path d="M5.5 2L10 1.5L12 5L8.5 6Z" fill="#2a90f0"/><path d="M16 3V5.5L13 7.5L11.5 6.5Z" fill="#003a9e"/></svg>
<div class="l" style="left:955.4px;top:552px;color:#1a2060">Alterar</div>
<div class="h" style="left:823px;top:572px;width:179px;height:23px;line-height:25px;letter-spacing:.86px">Garantia</div>
<div class="" style="left:938px;top:598px;width:63px;height:2px;background:#f4962c"></div>
<div class="" style="left:938px;top:600px;width:63px;height:1px;background:#c6d0dc"></div>
<div class="" style="left:818px;top:324px;width:195px;height:56px;border:5px solid #e01f26"></div>
<div class="" style="left:1px;top:605px;width:1024px;height:21px;background:#cfe0f3;border-top:1px solid #d9dde6"></div>
<div class="" style="left:0px;top:626px;width:1026px;height:18px;background:#eff4fd"></div>
<div class="" style="left:158px;top:626px;width:867px;height:1px;background:#000"></div>
<svg style="left:138px;top:625px" width="22" height="19"><path d="M3 18L20 1" stroke="#000" stroke-width="1.2"/></svg>
<div class="" style="left:1px;top:640px;width:142px;height:2px;background:#3a86e0"></div>
<div class="" style="left:0px;top:470px;width:1px;height:86px;background:#2a78c8"></div>
<div class="" style="left:0px;top:556px;width:1px;height:88px;background:#141c2c"></div>
<div class="l" style="left:11.4px;top:628px;">Cadastro de Produtos</div>
<div class="" style="left:0px;top:644px;width:1026px;height:1px;background:#1a1a1a"></div>
<div class="" style="left:0px;top:645px;width:1025px;height:22px;background:#bfcbda"></div>
<div class="" style="left:0px;top:667px;width:1026px;height:1px;background:#2a2a2a"></div>
<div class="" style="left:4px;top:647px;width:161px;height:19px;border:1px solid #3a6fc0;border-radius:2px"></div>
<div class="" style="left:166px;top:647px;width:114px;height:19px;border:1px solid #3a6fc0;border-radius:2px"></div>
<div class="" style="left:282px;top:647px;width:89px;height:19px;border:1px solid #3a6fc0;border-radius:2px"></div>
<div class="" style="left:373px;top:647px;width:140px;height:19px;border:1px solid #3a6fc0;border-radius:2px"></div>
<div class="" style="left:515px;top:647px;width:173px;height:19px;border:1px solid #3a6fc0;border-radius:2px"></div>
<div class="l" style="left:8.0px;top:650px;width:154px;overflow:hidden;letter-spacing:-.1px">Módulo: Cadastro de Produtos</div>
<div class="" style="left:172px;top:651px;width:10px;height:11px;background:#eeeedd;border:1px solid #444"></div>
<div class="l" style="left:187.4px;top:650px;">Caixa Fechado</div>
<div class="l" style="left:285.4px;top:649.5px;color:#f01c1c">5 dias</div>
<div class="l" style="left:518.4px;top:649.5px;color:#f01c1c;font-weight:bold;letter-spacing:-.1px">Nenhum Agendamento!</div>
</div></body></html>
